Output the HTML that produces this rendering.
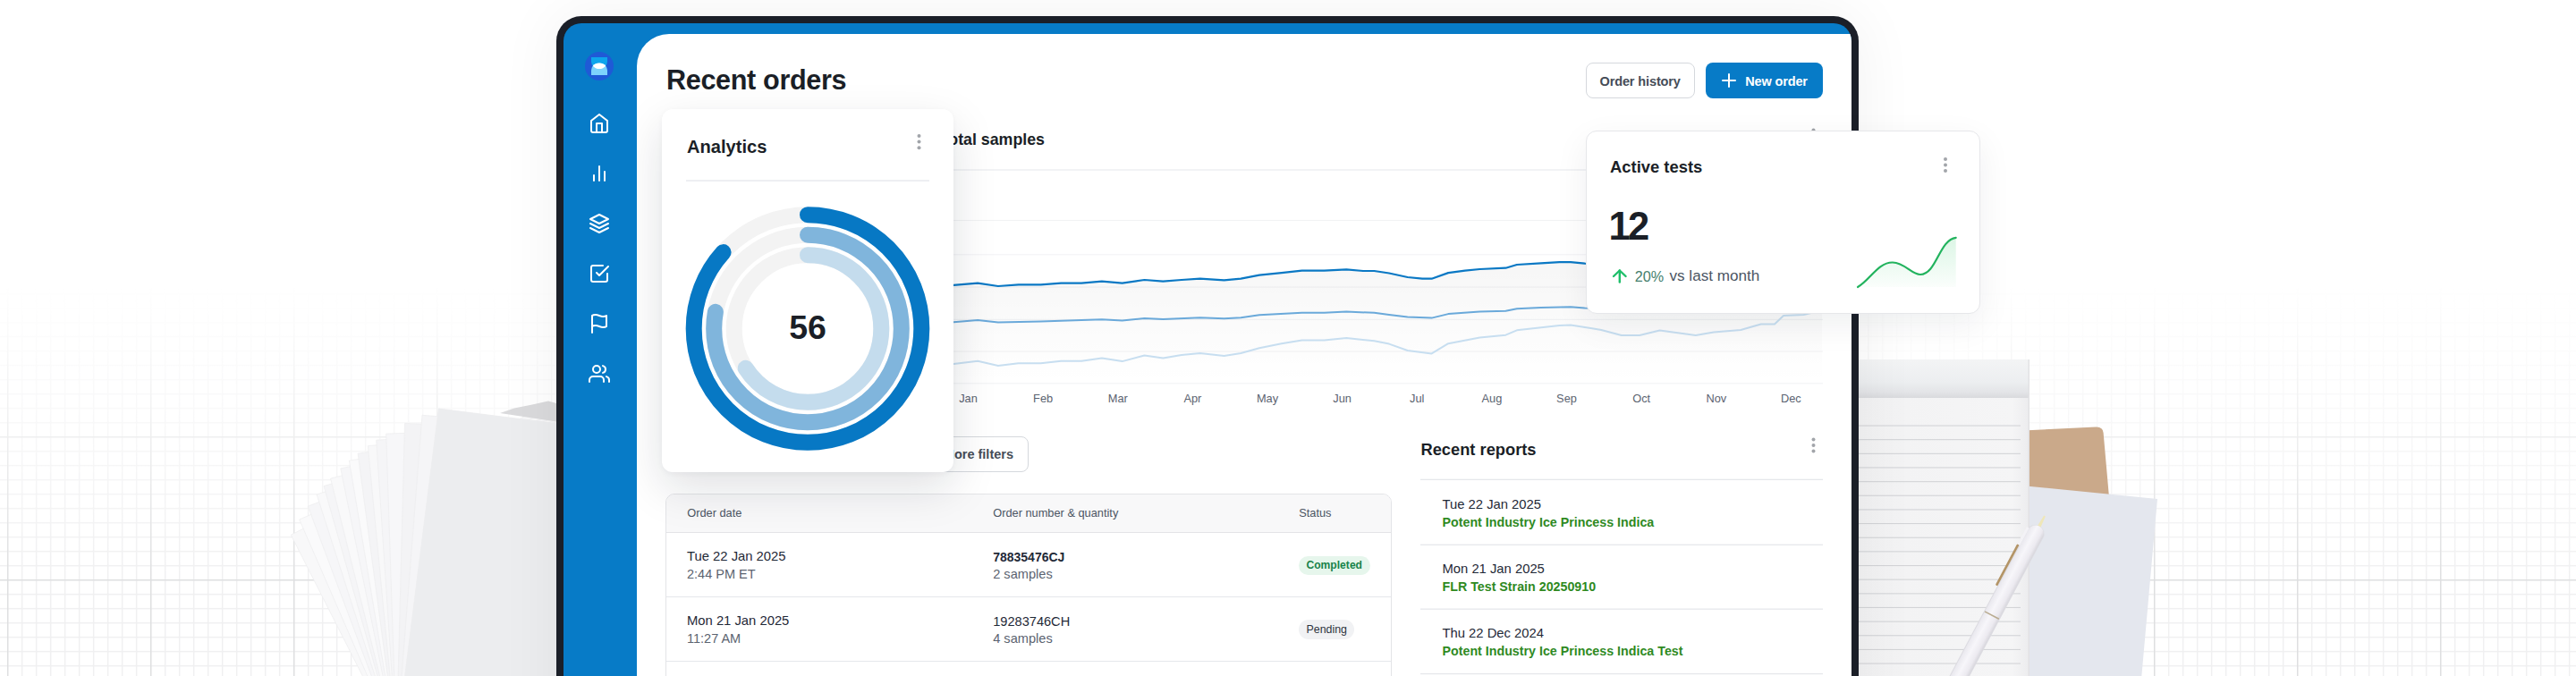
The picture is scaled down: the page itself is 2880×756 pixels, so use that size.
<!DOCTYPE html>
<html><head><meta charset="utf-8">
<style>
*{box-sizing:border-box;margin:0;padding:0}
html,body{width:2880px;height:756px;overflow:hidden;background:#fff}
body{position:relative;font-family:"Liberation Sans",sans-serif;color:#1b1f27}
svg{position:absolute;left:0;top:0;overflow:visible}
.t{position:absolute;white-space:nowrap;line-height:1}
.box{position:absolute}
</style></head><body>
<svg width="2880" height="756" style="width:2880px;height:756px">
<defs>
<pattern id="minor" x="0" y="0" width="16" height="16" patternUnits="userSpaceOnUse">
<rect x="7.9" y="0" width="1.5" height="16" fill="#f0f0f1"/>
<rect x="0" y="7.9" width="16" height="1.5" fill="#f0f0f1"/>
</pattern>
<pattern id="major" x="0" y="0" width="160" height="160" patternUnits="userSpaceOnUse">
<rect x="8" y="0" width="1.4" height="160" fill="#dedfe0"/>
<rect x="0" y="8" width="160" height="1.4" fill="#dedfe0"/>
</pattern>
<linearGradient id="gfade" x1="0" y1="0" x2="0" y2="1">
<stop offset="0" stop-color="#000"/>
<stop offset="0.42" stop-color="#000"/>
<stop offset="0.86" stop-color="#fff"/>
<stop offset="1" stop-color="#fff"/>
</linearGradient>
<mask id="gmask"><rect width="2880" height="756" fill="url(#gfade)"/></mask>
</defs>
<g mask="url(#gmask)">
<rect width="2880" height="756" fill="url(#minor)"/>
<rect width="2880" height="756" fill="url(#major)"/>
</g>
</svg>
<svg width="2880" height="756" style="width:2880px;height:756px">
<defs>
<linearGradient id="padhead" x1="0" y1="0" x2="0" y2="1">
<stop offset="0" stop-color="#f3f4f5"/><stop offset="0.6" stop-color="#eceef0"/><stop offset="0.85" stop-color="#e3e4e7"/><stop offset="1" stop-color="#d9dadd"/></linearGradient>
<linearGradient id="padpage" x1="0" y1="0" x2="1" y2="0">
<stop offset="0" stop-color="#f2f2f3"/><stop offset="0.9" stop-color="#f5f5f6"/><stop offset="1" stop-color="#ececee"/></linearGradient>
<linearGradient id="pen" x1="0" y1="0" x2="1" y2="0">
<stop offset="0" stop-color="#e9e8ee"/><stop offset="0.4" stop-color="#f7f6fa"/><stop offset="0.8" stop-color="#eceaf0"/><stop offset="1" stop-color="#d9d8de"/></linearGradient>
<filter id="blur1"><feGaussianBlur stdDeviation="0.6"/></filter>
</defs>
<polygon points="443.2,830.5 325.3,598.2 610.7,453.4 728.6,685.7" fill="#f8f8f9" stroke="#ececee" stroke-width="0.7"/>
<polygon points="443.2,830.5 334.7,581.0 628.2,453.4 736.7,702.9" fill="#fafafb" stroke="#ececee" stroke-width="0.7"/>
<polygon points="443.2,830.5 344.3,566.1 644.1,454.0 742.9,718.4" fill="#f6f6f8" stroke="#ececee" stroke-width="0.7"/>
<polygon points="443.2,830.5 354.1,553.0 658.8,455.2 747.9,732.7" fill="#f9f9fa" stroke="#ececee" stroke-width="0.7"/>
<polygon points="443.2,830.5 362.0,543.5 669.9,456.4 751.1,743.4" fill="#f5f5f7" stroke="#ececee" stroke-width="0.7"/>
<polygon points="443.2,830.5 369.6,535.1 680.1,457.7 753.7,753.1" fill="#f9f9fa" stroke="#ececee" stroke-width="0.7"/>
<polygon points="443.2,830.5 380.8,523.9 694.4,460.1 756.8,766.7" fill="#f6f6f8" stroke="#ececee" stroke-width="0.7"/>
<polygon points="443.2,830.5 390.4,515.2 706.0,462.4 758.8,777.7" fill="#fafafb" stroke="#ececee" stroke-width="0.7"/>
<polygon points="443.2,830.5 400.1,507.2 717.3,464.9 760.4,788.2" fill="#f4f4f6" stroke="#ececee" stroke-width="0.7"/>
<polygon points="443.2,830.5 411.3,498.7 729.8,468.1 761.7,799.8" fill="#f8f8f9" stroke="#ececee" stroke-width="0.7"/>
<polygon points="443.2,830.5 420.7,492.2 740.0,471.0 762.5,809.3" fill="#f5f5f7" stroke="#ececee" stroke-width="0.7"/>
<polygon points="443.2,830.5 431.7,485.1 751.6,474.5 763.0,819.9" fill="#f7f7f9" stroke="#ececee" stroke-width="0.7"/>
<polygon points="443.2,830.5 452.5,473.5 772.4,481.9 763.1,838.9" fill="#f3f3f5" stroke="#ececee" stroke-width="0.7"/>
<polygon points="443.2,830.5 472.0,464.3 791.0,489.4 762.2,855.6" fill="#f5f5f7" stroke="#ececee" stroke-width="0.7"/>
<polygon points="443.2,830.5 490.4,457.0 807.9,497.1 760.7,870.6" fill="#eeeef0" stroke="#ececee" stroke-width="0.7"/>
<polygon points="559,462 575,456.5 595,452.5 613,448.5 622,451 622,471.4" fill="#dadadc" filter="url(#blur1)"/>
<polygon points="443.2,830.5 490.4,457.0 807.9,497.1 760.7,870.6" fill="#ecedef"/>
<polygon points="2240,300 2358,300 2358,760 2240,760" fill="none"/>
<path d="M2230 483 L2343 477.5 Q2351 477 2351.6 484 L2358 556 L2230 560 Z" fill="#caa98a"/>
<polygon points="2240,541 2412,558 2394,760 2240,760" fill="#e4e7ee"/>
<rect x="2070" y="402" width="199" height="360" fill="url(#padpage)"/>
<rect x="2070" y="402" width="199" height="43" fill="url(#padhead)"/>
<rect x="2267.5" y="402" width="1.5" height="360" fill="#e2e2e4"/>
<rect x="2070" y="475.5" width="189" height="1.1" fill="#d3d4d7"/>
<rect x="2070" y="491.1" width="189" height="1.1" fill="#d3d4d7"/>
<rect x="2070" y="506.8" width="189" height="1.1" fill="#d3d4d7"/>
<rect x="2070" y="522.4" width="189" height="1.1" fill="#d3d4d7"/>
<rect x="2070" y="538.1" width="189" height="1.1" fill="#d3d4d7"/>
<rect x="2070" y="553.7" width="189" height="1.1" fill="#d3d4d7"/>
<rect x="2070" y="569.4" width="189" height="1.1" fill="#d3d4d7"/>
<rect x="2070" y="585.0" width="189" height="1.1" fill="#d3d4d7"/>
<rect x="2070" y="600.7" width="189" height="1.1" fill="#d3d4d7"/>
<rect x="2070" y="616.3" width="189" height="1.1" fill="#d3d4d7"/>
<rect x="2070" y="632.0" width="189" height="1.1" fill="#d3d4d7"/>
<rect x="2070" y="647.6" width="189" height="1.1" fill="#d3d4d7"/>
<rect x="2070" y="663.3" width="189" height="1.1" fill="#d3d4d7"/>
<rect x="2070" y="678.9" width="189" height="1.1" fill="#d3d4d7"/>
<rect x="2070" y="694.6" width="189" height="1.1" fill="#d3d4d7"/>
<rect x="2070" y="710.2" width="189" height="1.1" fill="#d3d4d7"/>
<rect x="2070" y="725.9" width="189" height="1.1" fill="#d3d4d7"/>
<rect x="2070" y="741.5" width="189" height="1.1" fill="#d3d4d7"/>
<rect x="2070" y="757.2" width="189" height="1.1" fill="#d3d4d7"/>
<g transform="translate(2286 577) rotate(28)"><polygon points="-0.9,0 0.9,0 2,14 -2,14" fill="#efe7b8"/><rect x="-10" y="13" width="20" height="280" rx="9" fill="#dcdbe1" filter="url(#blur1)"/><rect x="-9" y="13" width="18" height="280" rx="9" fill="url(#pen)"/><rect x="-12.5" y="42" width="2.6" height="52" rx="1" fill="#b39466"/><rect x="-12" y="20" width="3" height="22" fill="#f3f2f6"/><rect x="-9" y="125" width="18" height="1.6" fill="#b9ab90"/></g>
</svg>
<div class="box" style="left:622px;top:18px;width:1456px;height:900px;background:#1b1f28;border-radius:28px;box-shadow:0 0 70px rgba(20,20,40,0.06)"></div>
<div class="box" style="left:630px;top:26px;width:1440px;height:900px;background:#077bc7;border-radius:20px;overflow:hidden">
  <div class="box" style="left:82px;top:12px;width:1400px;height:900px;background:#fff;border-top-left-radius:36px"></div>
</div>
<svg width="2880" height="756">
<g transform="translate(658 126)" fill="none" stroke="#fff" stroke-width="2" stroke-linecap="round" stroke-linejoin="round"><path d="M3 9l9-7 9 7v11a2 2 0 0 1-2 2H5a2 2 0 0 1-2-2z"/><polyline points="9 22 9 12 15 12 15 22"/></g>
<g transform="translate(658 182)" fill="none" stroke="#fff" stroke-width="2" stroke-linecap="round" stroke-linejoin="round"><line x1="18" y1="20" x2="18" y2="10"/><line x1="12" y1="20" x2="12" y2="4"/><line x1="6" y1="20" x2="6" y2="14"/></g>
<g transform="translate(658 238)" fill="none" stroke="#fff" stroke-width="2" stroke-linecap="round" stroke-linejoin="round"><polygon points="12 2 2 7 12 12 22 7 12 2"/><polyline points="2 17 12 22 22 17"/><polyline points="2 12 12 17 22 12"/></g>
<g transform="translate(658 294)" fill="none" stroke="#fff" stroke-width="2" stroke-linecap="round" stroke-linejoin="round"><polyline points="9 11 12 14 22 4"/><path d="M21 12v7a2 2 0 0 1-2 2H5a2 2 0 0 1-2-2V5a2 2 0 0 1 2-2h11"/></g>
<g transform="translate(658 350)" fill="none" stroke="#fff" stroke-width="2" stroke-linecap="round" stroke-linejoin="round"><path d="M4 15s1-1 4-1 5 2 8 2 4-1 4-1V3s-1 1-4 1-5-2-8-2-4 1-4 1z"/><line x1="4" y1="22" x2="4" y2="15"/></g>
<g transform="translate(658 406)" fill="none" stroke="#fff" stroke-width="2" stroke-linecap="round" stroke-linejoin="round"><path d="M17 21v-2a4 4 0 0 0-4-4H5a4 4 0 0 0-4 4v2"/><circle cx="9" cy="7" r="4"/><path d="M23 21v-2a4 4 0 0 0-3-3.87"/><path d="M16 3.13a4 4 0 0 1 0 7.75"/></g>
<circle cx="670" cy="74" r="16" fill="#1f5ad6"/>
<clipPath id="lgc"><rect x="661" y="64" width="18" height="20"/></clipPath>
<g clip-path="url(#lgc)">
<path d="M661 64 H679 V69 A9 8 0 0 1 661 69 Z" fill="#0ea5ec"/>
<path d="M661 84 V78.5 A9 8 0 0 1 679 78.5 V84 Z" fill="#7dd3fc"/>
<path d="M662.76 73.75 A9 8 0 0 1 677.24 73.75 A9 8 0 0 1 662.76 73.75 Z" fill="#fff"/>
</g>
</svg>
<div class="t" style="left:745.0px;top:74.4px;font-size:30.6px;font-weight:700;color:#1b1f27;letter-spacing:-0.35px;">Recent orders</div>
<div class="box" style="left:1773px;top:70px;width:121.5px;height:40px;border:1.5px solid #d5d8dd;border-radius:8px;background:#fff"></div>
<div class="t" style="left:1788.5px;top:83.5px;font-size:14.5px;font-weight:700;color:#454c57;letter-spacing:-0.12px;">Order history</div>
<div class="box" style="left:1907px;top:70px;width:131px;height:40px;background:#077bc7;border-radius:8px"></div>
<svg width="2880" height="756"><g stroke="#fff" stroke-width="2" stroke-linecap="round"><line x1="1933" y1="83" x2="1933" y2="97"/><line x1="1926" y1="90" x2="1940" y2="90"/></g></svg>
<div class="t" style="left:1951.3px;top:83.5px;font-size:14.5px;font-weight:700;color:#fff;letter-spacing:-0.15px;">New order</div>
<div class="t" style="right:1712.0px;top:147.7px;font-size:17.8px;font-weight:700;color:#1b1f27;">Total samples</div>
<svg width="2880" height="756">
<rect x="768" y="189.5" width="1270" height="1" fill="#e5e7eb"/>
<rect x="768" y="246.0" width="1270" height="1" fill="#f1f2f4"/>
<rect x="768" y="284.3" width="1270" height="1" fill="#f1f2f4"/>
<rect x="768" y="320.5" width="1270" height="1" fill="#f1f2f4"/>
<rect x="768" y="356.8" width="1270" height="1" fill="#f1f2f4"/>
<rect x="768" y="392.5" width="1270" height="1" fill="#f1f2f4"/>
<rect x="768" y="428.3" width="1270" height="1" fill="#f1f2f4"/>
</svg>
<div class="t" style="left:882.5px;width:400px;text-align:center;top:440.2px;font-size:12.8px;font-weight:400;color:#5b6370;">Jan</div>
<div class="t" style="left:966.1px;width:400px;text-align:center;top:440.2px;font-size:12.8px;font-weight:400;color:#5b6370;">Feb</div>
<div class="t" style="left:1049.8px;width:400px;text-align:center;top:440.2px;font-size:12.8px;font-weight:400;color:#5b6370;">Mar</div>
<div class="t" style="left:1133.4px;width:400px;text-align:center;top:440.2px;font-size:12.8px;font-weight:400;color:#5b6370;">Apr</div>
<div class="t" style="left:1217.0px;width:400px;text-align:center;top:440.2px;font-size:12.8px;font-weight:400;color:#5b6370;">May</div>
<div class="t" style="left:1300.7px;width:400px;text-align:center;top:440.2px;font-size:12.8px;font-weight:400;color:#5b6370;">Jun</div>
<div class="t" style="left:1384.3px;width:400px;text-align:center;top:440.2px;font-size:12.8px;font-weight:400;color:#5b6370;">Jul</div>
<div class="t" style="left:1467.9px;width:400px;text-align:center;top:440.2px;font-size:12.8px;font-weight:400;color:#5b6370;">Aug</div>
<div class="t" style="left:1551.5px;width:400px;text-align:center;top:440.2px;font-size:12.8px;font-weight:400;color:#5b6370;">Sep</div>
<div class="t" style="left:1635.2px;width:400px;text-align:center;top:440.2px;font-size:12.8px;font-weight:400;color:#5b6370;">Oct</div>
<div class="t" style="left:1718.8px;width:400px;text-align:center;top:440.2px;font-size:12.8px;font-weight:400;color:#5b6370;">Nov</div>
<div class="t" style="left:1802.4px;width:400px;text-align:center;top:440.2px;font-size:12.8px;font-weight:400;color:#5b6370;">Dec</div>
<svg width="2880" height="756"><defs><linearGradient id="af" x1="0" y1="0" x2="0" y2="1"><stop offset="0" stop-color="#000" stop-opacity="0.035"/><stop offset="1" stop-color="#000" stop-opacity="0.0"/></linearGradient></defs>
<polygon points="1040.0,318.0 1066.2,318.8 1093.1,316.7 1115.9,320.0 1138.7,318.4 1163.6,318.4 1186.3,316.7 1209.1,316.7 1231.9,314.6 1254.7,316.7 1279.5,313.0 1300.3,314.6 1321.0,313.0 1341.7,311.7 1368.6,313.4 1387.3,311.7 1408.0,307.6 1432.8,305.1 1455.6,302.6 1480.5,302.6 1505.3,301.4 1524.0,303.0 1536.4,303.0 1553.0,305.5 1573.7,310.0 1590.2,311.7 1600.6,311.7 1619.2,305.1 1637.9,302.6 1654.4,301.0 1683.4,299.7 1695.9,296.0 1722.8,294.3 1743.5,293.1 1756.0,293.1 1771.7,294.7 1790.0,296.0 1830.0,296.0 2037.0,290.0 2037,429 1040,429" fill="url(#af)"/>
<polyline points="1040.0,408.0 1066.2,407.0 1093.1,403.7 1115.9,409.0 1138.7,406.2 1163.6,406.2 1186.3,403.7 1209.1,403.7 1231.9,400.4 1254.7,404.1 1279.5,397.5 1300.3,400.4 1321.0,397.0 1341.7,395.0 1368.6,397.9 1387.3,395.0 1408.0,389.2 1432.8,384.2 1455.6,380.5 1480.5,380.5 1505.3,378.0 1536.4,381.3 1553.0,384.6 1573.7,392.0 1600.6,395.4 1619.2,384.2 1654.4,377.6 1683.4,374.7 1695.9,369.3 1743.5,363.9 1756.0,363.5 1780.0,367.2 1790.2,369.0 1812.8,375.0 1833.0,375.0 1855.6,369.5 1895.8,375.0 1916.0,371.5 1946.2,369.0 1968.8,362.5 1984.0,362.5 1994.0,353.0 2016.6,352.0 2037.0,347.0" fill="none" stroke="#c7def0" stroke-width="2" stroke-linejoin="round"/>
<polyline points="1040.0,360.0 1066.2,360.2 1093.1,358.1 1115.9,360.6 1163.6,359.4 1231.9,357.3 1254.7,358.5 1279.5,356.0 1300.3,357.0 1341.7,355.2 1368.6,356.2 1387.3,355.2 1408.0,352.3 1455.6,349.8 1480.5,349.8 1505.3,348.6 1536.4,349.8 1553.0,351.9 1573.7,354.4 1600.6,355.6 1619.2,351.1 1654.4,348.6 1683.4,347.8 1695.9,345.3 1722.8,344.0 1756.0,343.2 1771.7,344.5 1830.0,346.0 2037.0,340.0" fill="none" stroke="#6aa9da" stroke-width="2" stroke-linejoin="round"/>
<polyline points="1040.0,318.0 1066.2,318.8 1093.1,316.7 1115.9,320.0 1138.7,318.4 1163.6,318.4 1186.3,316.7 1209.1,316.7 1231.9,314.6 1254.7,316.7 1279.5,313.0 1300.3,314.6 1321.0,313.0 1341.7,311.7 1368.6,313.4 1387.3,311.7 1408.0,307.6 1432.8,305.1 1455.6,302.6 1480.5,302.6 1505.3,301.4 1524.0,303.0 1536.4,303.0 1553.0,305.5 1573.7,310.0 1590.2,311.7 1600.6,311.7 1619.2,305.1 1637.9,302.6 1654.4,301.0 1683.4,299.7 1695.9,296.0 1722.8,294.3 1743.5,293.1 1756.0,293.1 1771.7,294.7 1790.0,296.0 1830.0,296.0 2037.0,290.0" fill="none" stroke="#0a78c4" stroke-width="2.2" stroke-linejoin="round"/>
</svg>
<div class="box" style="left:1000px;top:488px;width:150px;height:40px;border:1.5px solid #d5d8dd;border-radius:8px;background:#fff"></div>
<div class="t" style="right:1747.0px;top:501.2px;font-size:14.5px;font-weight:700;color:#454c57;">More filters</div>
<div class="box" style="left:744px;top:552px;width:811.5px;height:260px;border:1.5px solid #e3e4e7;border-radius:10px;background:#fff;overflow:hidden"><div class="box" style="left:0;top:0;width:811px;height:43px;background:#f8f8f9;border-bottom:1.5px solid #e3e4e7"></div><div class="box" style="left:0;top:113.5px;width:811px;height:1.5px;background:#e5e7eb"></div><div class="box" style="left:0;top:185.5px;width:811px;height:1.5px;background:#e5e7eb"></div></div>
<div class="t" style="left:768.2px;top:568.4px;font-size:12.8px;font-weight:400;color:#4b5563;">Order date</div>
<div class="t" style="left:1110.2px;top:568.4px;font-size:12.8px;font-weight:400;color:#4b5563;">Order number &amp; quantity</div>
<div class="t" style="left:1452.2px;top:568.4px;font-size:12.8px;font-weight:400;color:#4b5563;">Status</div>
<div class="t" style="left:768.0px;top:615.2px;font-size:14.8px;font-weight:400;color:#1f2937;">Tue 22 Jan 2025</div>
<div class="t" style="left:768.0px;top:635.4px;font-size:14.5px;font-weight:400;color:#5b6370;">2:44 PM ET</div>
<div class="t" style="left:768.0px;top:687.3px;font-size:14.8px;font-weight:400;color:#1f2937;">Mon 21 Jan 2025</div>
<div class="t" style="left:768.0px;top:707.4px;font-size:14.5px;font-weight:400;color:#5b6370;">11:27 AM</div>
<div class="t" style="left:1110.2px;top:616.0px;font-size:14.0px;font-weight:700;color:#1f2937;">78835476CJ</div>
<div class="t" style="left:1110.2px;top:634.9px;font-size:14.6px;font-weight:400;color:#5b6370;">2 samples</div>
<div class="t" style="left:1110.2px;top:687.5px;font-size:14.6px;font-weight:400;color:#1f2937;">19283746CH</div>
<div class="t" style="left:1110.2px;top:707.1px;font-size:14.6px;font-weight:400;color:#5b6370;">4 samples</div>
<div class="box" style="left:1452.2px;top:621.5px;width:79.8px;height:21.4px;border-radius:11px;background:#e6f6ec"></div>
<div class="t" style="left:1460.5px;top:626.3px;font-size:12.1px;font-weight:700;color:#18834a;">Completed</div>
<div class="box" style="left:1452.2px;top:693.4px;width:62.3px;height:21.7px;border-radius:11px;background:#f1f2f4"></div>
<div class="t" style="left:1460.5px;top:698.3px;font-size:12.4px;font-weight:400;color:#2d3440;">Pending</div>
<div class="t" style="left:1588.5px;top:493.7px;font-size:18.3px;font-weight:700;color:#1b1f27;">Recent reports</div>
<svg width="2880" height="756"><rect x="1588" y="535.6999999999999" width="450" height="1.3" fill="#e5e7eb"/><rect x="1588" y="608.6" width="450" height="1.3" fill="#e5e7eb"/><rect x="1588" y="680.5" width="450" height="1.3" fill="#e5e7eb"/><rect x="1588" y="752.9" width="450" height="1.3" fill="#e5e7eb"/></svg>
<div class="t" style="left:1612.5px;top:556.8px;font-size:14.8px;font-weight:400;color:#1f2937;">Tue 22 Jan 2025</div>
<div class="t" style="left:1612.5px;top:577.2px;font-size:14.26px;font-weight:700;color:#2f8a1f;">Potent Industry Ice Princess Indica</div>
<div class="t" style="left:1612.5px;top:628.8px;font-size:14.8px;font-weight:400;color:#1f2937;">Mon 21 Jan 2025</div>
<div class="t" style="left:1612.5px;top:649.2px;font-size:14.26px;font-weight:700;color:#2f8a1f;">FLR Test Strain 20250910</div>
<div class="t" style="left:1612.5px;top:700.8px;font-size:14.8px;font-weight:400;color:#1f2937;">Thu 22 Dec 2024</div>
<div class="t" style="left:1612.5px;top:721.2px;font-size:14.26px;font-weight:700;color:#2f8a1f;">Potent Industry Ice Princess Indica Test</div>
<svg width="2880" height="756"><g fill="#a2a5aa"><circle cx="2027.5" cy="491.4" r="2"/><circle cx="2027.5" cy="498" r="2"/><circle cx="2027.5" cy="504.6" r="2"/></g></svg>
<svg width="2880" height="756"><g fill="#a2a5aa"><circle cx="2027.5" cy="145.4" r="2"/><circle cx="2027.5" cy="152" r="2"/><circle cx="2027.5" cy="158.6" r="2"/></g></svg>
<div class="box" style="left:712px;top:38px;width:1358px;height:718px;overflow:hidden;border-top-left-radius:36px"><div class="box" style="left:27.5px;top:83.5px;width:326.5px;height:406.5px;background:#fff;border-radius:12px;box-shadow:0 18px 50px rgba(17,24,39,0.13),0 2px 6px rgba(17,24,39,0.04)"></div></div>
<div class="t" style="left:768.0px;top:154.0px;font-size:20.1px;font-weight:700;color:#1b1f27;">Analytics</div>
<svg width="2880" height="756"><g fill="#a2a5aa"><circle cx="1027.5" cy="152.0" r="2"/><circle cx="1027.5" cy="158.6" r="2"/><circle cx="1027.5" cy="165.2" r="2"/></g></svg>
<svg width="2880" height="756"><rect x="767" y="201.4" width="272" height="1.3" fill="#e5e7eb"/></svg>
<svg width="2880" height="756"><g fill="none" stroke-width="18">
<circle cx="903" cy="367.5" r="127.3" stroke="#f3f3f3"/>
<circle cx="903" cy="367.5" r="127.3" stroke="#0778c4" stroke-linecap="round" stroke-dasharray="693.20 799.85" transform="rotate(-90 903 367.5)"/>
<circle cx="903" cy="367.5" r="104.8" stroke="#f3f3f3"/>
<circle cx="903" cy="367.5" r="104.8" stroke="#80b5dc" stroke-linecap="round" stroke-dasharray="512.15 658.48" transform="rotate(-90 903 367.5)"/>
<circle cx="903" cy="367.5" r="82.3" stroke="#f3f3f3"/>
<circle cx="903" cy="367.5" r="82.3" stroke="#c4dced" stroke-linecap="round" stroke-dasharray="340.43 517.11" transform="rotate(-90 903 367.5)"/>
</g></svg>
<div class="t" style="left:703.0px;width:400px;text-align:center;top:348.3px;font-size:37.5px;font-weight:700;color:#1b1f27;">56</div>
<div class="box" style="left:1772.6px;top:146.2px;width:441px;height:205px;background:#fff;border:1.5px solid #e6e7ea;border-radius:12px;box-shadow:0 12px 38px rgba(17,24,39,0.065)"></div>
<div class="t" style="left:1800.0px;top:177.9px;font-size:18.4px;font-weight:700;color:#1b1f27;">Active tests</div>
<svg width="2880" height="756"><g fill="#a2a5aa"><circle cx="2175" cy="177.9" r="2"/><circle cx="2175" cy="184.5" r="2"/><circle cx="2175" cy="191.1" r="2"/></g></svg>
<div class="t" style="left:1798.5px;top:231.7px;font-size:43.5px;font-weight:700;color:#1b1f27;letter-spacing:-2.7px;">12</div>
<svg width="2880" height="756"><g fill="none" stroke="#1fbf6a" stroke-width="2.4" stroke-linecap="round" stroke-linejoin="round"><line x1="1810.8" y1="302.5" x2="1810.8" y2="315.5"/><polyline points="1804,309 1810.8,302.5 1817.6,309"/></g></svg>
<div class="t" style="left:1827.8px;top:301.0px;font-size:16.2px;font-weight:400;color:#46806d;">20%</div>
<div class="t" style="left:1866.5px;top:300.2px;font-size:17.1px;font-weight:400;color:#4b5563;">vs last month</div>
<svg width="2880" height="756"><defs><linearGradient id="spf" x1="0" y1="0" x2="0" y2="1"><stop offset="0" stop-color="#22c55e" stop-opacity="0.16"/><stop offset="1" stop-color="#22c55e" stop-opacity="0.02"/></linearGradient></defs>
<path d="M2077 321 C2090 314 2100 293 2116 293.5 C2130 294 2137 307 2147 307 C2165 307 2168 268 2186.7 265.8 L2186.7 321 Z" fill="url(#spf)"/>
<path d="M2077 321 C2090 314 2100 293 2116 293.5 C2130 294 2137 307 2147 307 C2165 307 2168 268 2186.7 265.8" fill="none" stroke="#22b35e" stroke-width="2.2" stroke-linecap="round"/>
</svg>
</body></html>
